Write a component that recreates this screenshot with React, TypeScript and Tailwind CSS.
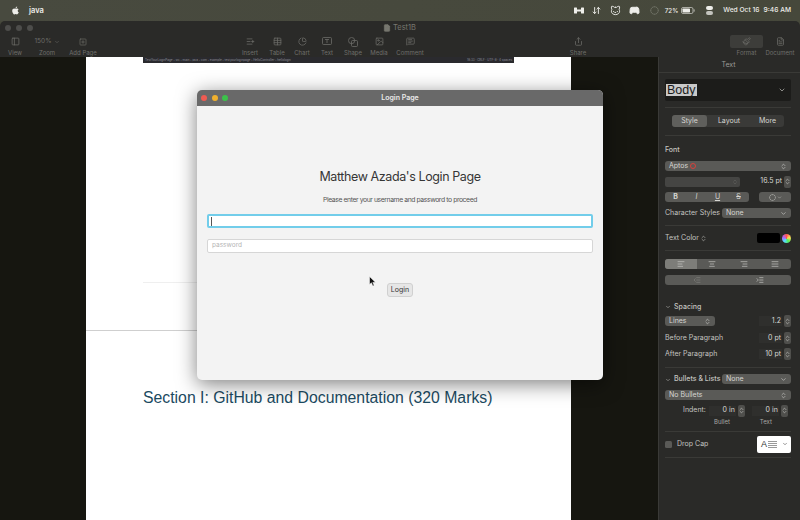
import {
  AlignCenter,
  AlignJustify,
  AlignLeft,
  AlignRight,
  ArrowDownUp,
  Cat,
  ChartPie,
  ChevronDown,
  ChevronsUpDown,
  CircleDashed,
  FileText,
  Gamepad2,
  Image,
  IndentDecrease,
  IndentIncrease,
  ListPlus,
  MessageSquareText,
  PanelLeft,
  Paintbrush,
  Share,
  SquarePlus,
  Table,
} from "lucide-react";
import type { ReactNode } from "react";
import { FaApple } from "react-icons/fa";

function ToolItem({ icon, label, className }: { icon: ReactNode; label: string; className: string }) {
  return (
    <div className={`flex flex-col items-center gap-px ${className}`}>
      <div className="flex h-[13px] items-center justify-center text-[#6c6c68]">{icon}</div>
      <span className="text-[6px] leading-[8px] whitespace-nowrap text-[#6f6f6b]">{label}</span>
    </div>
  );
}

function Sep() {
  return <div className="h-px bg-[#3a3a37]" />;
}

function Pill({ label, className }: { label: string; className: string }) {
  return (
    <div className={`flex h-[10px] shrink-0 items-center justify-between rounded-[3px] bg-[#5a5a57] px-[4px] text-[7px] text-[#d6d6d2] ${className}`}>
      <span>{label}</span>
      <ChevronDown size={7} strokeWidth={2} />
    </div>
  );
}

function SelectRow({ label, className }: { label: ReactNode; className: string }) {
  return (
    <div className={`flex h-[10px] shrink-0 items-center justify-between rounded-[3px] bg-[#5a5a57] px-[4px] text-[7px] text-[#d6d6d2] ${className}`}>
      <span className="flex items-center gap-[1px]">{label}</span>
      <ChevronsUpDown size={7} strokeWidth={2} />
    </div>
  );
}

function Stepper() {
  return (
    <div className="flex h-[12px] w-[7px] shrink-0 items-center justify-center rounded-[2px] bg-[#4f4f4c] text-[#cfcfcb]">
      <ChevronsUpDown size={7} strokeWidth={2} />
    </div>
  );
}

function NumberBox({ value, className }: { value: string; className: string }) {
  return (
    <div className={`flex h-[10px] items-center justify-end bg-[#2f2f2d] pr-px whitespace-nowrap text-[#d8d8d4] ${className}`}>
      {value}
    </div>
  );
}

function NumberRow({ label, value }: { label: string; value: string }) {
  return (
    <div className="flex h-[16px] items-center justify-between text-[#c4c4c0]">
      <span className="pt-px">{label}</span>
      <div className="flex items-center gap-[2px]">
        <NumberBox value={value} className="w-[23px]" />
        <Stepper />
      </div>
    </div>
  );
}

function Lights({ size, gap, colors }: { size: string; gap: string; colors: string[] }) {
  return (
    <div className={`flex items-center ${gap}`}>
      {colors.map((c, i) => (
        <span key={i} className={`${size} rounded-full`} style={{ backgroundColor: c }} />
      ))}
    </div>
  );
}

function MenuBar() {
  return (
    <div className="flex h-[21px] shrink-0 items-center bg-gradient-to-r from-[#484a3f] to-[#46483b] pr-[9px] pl-[11px] text-[7.5px] font-medium text-[#eeeeea]">
      <FaApple size={9} />
      <span className="ml-[9px] font-semibold">java</span>
      <div className="ml-auto flex items-center">
        {/* bar with two weights */}
        <svg className="mr-[8px]" width="10" height="7" viewBox="0 0 10 7" fill="currentColor">
          <rect x="0" y="0.5" width="3" height="6" rx="0.5" />
          <rect x="3" y="2.5" width="4" height="2" />
          <rect x="7" y="0.5" width="3" height="6" rx="0.5" />
        </svg>
        <ArrowDownUp size={9} strokeWidth={2.5} className="mr-[9px]" />
        <Cat size={11} className="mr-[8px]" />
        <Gamepad2 size={11} fill="currentColor" className="mr-[10px]" />
        <CircleDashed size={9} className="mr-[6px] text-[#8a8c80]" />
        <span className="mr-[3px] text-[6.2px]">72%</span>
        {/* battery */}
        <svg className="mr-[11px]" width="14" height="7" viewBox="0 0 14 7">
          <rect x="0.5" y="0.5" width="11.5" height="6" rx="1.5" fill="none" stroke="currentColor" strokeOpacity="0.6" />
          <rect x="1.5" y="1.5" width="7.5" height="4" rx="0.7" fill="currentColor" />
          <rect x="12.7" y="2.3" width="1" height="2.4" rx="0.4" fill="currentColor" fillOpacity="0.6" />
        </svg>
        {/* control center */}
        <svg className="mr-[10px]" width="7" height="9" viewBox="0 0 7 9" fill="currentColor">
          <rect x="0" y="0" width="7" height="4" rx="2" />
          <rect x="0" y="5" width="7" height="4" rx="2" fillOpacity="0.75" />
        </svg>
        <span className="mr-[4px] text-[6.7px]">Wed Oct 16</span>
        <span className="text-[6.7px]">9:46 AM</span>
      </div>
    </div>
  );
}

function Toolbar() {
  return (
    <div className="shrink-0 bg-[#46483b]">
      <div className="flex h-[36px] flex-col rounded-t-[5px] bg-[#2a2a28]">
        <div className="flex h-[14px] shrink-0 items-center pl-[5px]">
          <Lights size="size-[6px]" gap="gap-[5px]" colors={["#4d4d4b", "#4d4d4b", "#4d4d4b"]} />
          <div className="ml-[350px] flex items-center gap-[2px] text-[7.5px] text-[#77776f]">
            <FileText size={8} fill="currentColor" />
            <span>Test1B</span>
          </div>
        </div>
        <div className="flex items-start">
          <ToolItem className="ml-[9px] w-[12px]" label="View" icon={<PanelLeft size={9} />} />
          <ToolItem
            className="ml-[15px] w-[22px]"
            label="Zoom"
            icon={
              <span className="flex items-center gap-[2px] text-[6.5px] whitespace-nowrap">
                150% <ChevronDown size={6} />
              </span>
            }
          />
          <ToolItem className="ml-[12px] w-[26px]" label="Add Page" icon={<SquarePlus size={8} />} />
          <ToolItem className="ml-[146px] w-[16px]" label="Insert" icon={<ListPlus size={9} />} />
          <ToolItem className="ml-[11px] w-[16px]" label="Table" icon={<Table size={9} />} />
          <ToolItem className="ml-[9px] w-[16px]" label="Chart" icon={<ChartPie size={9} />} />
          <ToolItem
            className="ml-[9px] w-[16px]"
            label="Text"
            icon={
              <svg width="10" height="9" viewBox="0 0 10 9" fill="none" stroke="currentColor" strokeWidth="0.8">
                <rect x="0.5" y="0.5" width="9" height="7" rx="1" />
                <path d="M3 2.5H7M5 2.5V6" />
              </svg>
            }
          />
          <ToolItem
            className="ml-[10px] w-[16px]"
            label="Shape"
            icon={
              <svg width="10" height="10" viewBox="0 0 10 10" fill="none" stroke="currentColor" strokeWidth="0.8">
                <circle cx="3.6" cy="3.6" r="3.1" />
                <rect x="3.5" y="3.5" width="6" height="6" rx="1" />
              </svg>
            }
          />
          <ToolItem className="ml-[10px] w-[16px]" label="Media" icon={<Image size={9} />} />
          <ToolItem className="ml-[15px] w-[16px]" label="Comment" icon={<MessageSquareText size={9} />} />
          <ToolItem className="ml-[152px] w-[16px]" label="Share" icon={<Share size={9} />} />
          <div className="ml-[144px] flex w-[33px] flex-col items-center gap-px">
            <div className="flex h-[13px] w-[33px] items-center justify-center rounded-[2px] bg-[#3d3d3a] text-[#6c6c68]">
              <Paintbrush size={9} />
            </div>
            <span className="text-[6px] leading-[8px] text-[#6f6f6b]">Format</span>
          </div>
          <ToolItem className="ml-[2px] w-[30px]" label="Document" icon={<FileText size={9} />} />
        </div>
      </div>
    </div>
  );
}

function LoginWindow() {
  return (
    <div className="absolute top-[33px] left-[111px] flex h-[290px] w-[406px] flex-col overflow-hidden rounded-[5px] bg-[#f3f3f3] shadow-[0_4px_20px_rgba(0,0,0,0.5)]">
      <div className="relative flex h-[16px] shrink-0 items-center justify-center bg-[#696969]">
        <div className="absolute top-[5px] left-[4px]">
          <Lights size="size-[6px]" gap="gap-[4.5px]" colors={["#ee5b52", "#f0b02e", "#3cc24a"]} />
        </div>
        <span className="text-[7px] font-semibold text-[#e9e9e9]">Login Page</span>
      </div>
      <div className="flex flex-1 flex-col items-center px-[10px]">
        <h1 className="mt-[62px] text-[12.5px] leading-[18px] tracking-[-0.4px] text-[#363636]">Matthew Azada's Login Page</h1>
        <p className="mt-[8px] text-[6.8px] leading-[12px] tracking-[-0.4px] text-[#555555]">Please enter your username and password to proceed</p>
        <div className="mt-[8px] flex h-[14px] w-full items-center rounded-[2px] border-2 border-[#72cdea] bg-white px-[2px]">
          <span className="h-[9px] w-px bg-[#555555]" />
        </div>
        <div className="mt-[11px] flex h-[14px] w-full items-center rounded-[2px] border border-[#d6d6d6] bg-white px-[4px] text-[6.5px] text-[#b4b4b4]">
          password
        </div>
        <button className="mt-[30px] flex h-[14px] w-[26px] items-center justify-center rounded-[3px] border border-[#d0d0d0] bg-[#e6e6e6] text-[7px] text-[#333333]">
          Login
        </button>
      </div>
      <svg className="absolute top-[186px] left-[172px]" width="7" height="11" viewBox="0 0 7 11">
        <path d="M0.5 0.5 L0.5 8.5 L2.4 6.8 L3.8 10 L5.2 9.4 L3.8 6.4 L6.4 6.2 Z" fill="#111111" stroke="#ffffff" strokeWidth="0.5" />
      </svg>
    </div>
  );
}

function Page() {
  return (
    <div className="flex flex-1 bg-[#161610]">
      <div className="relative ml-[86px] flex w-[485px] flex-col bg-white">
        <div className="ml-[57px] flex h-[6px] w-[371px] items-center justify-between bg-[#2a2a2e] px-[2px] text-[3px] text-[#8f8f98]">
          <span className="whitespace-nowrap">TestYourLoginPage › src › main › java › com › example › testyourloginpage › HelloController › hellologin</span>
          <span className="whitespace-nowrap">18:33 · CRLF · UTF-8 · 4 spaces</span>
        </div>
        <div className="mt-[219px] ml-[57px] h-px w-[54px] bg-[#efefef]" />
        <div className="mt-[47px] h-px w-full bg-[#cfcfcf]" />
        <h2 className="mt-[57px] ml-[57px] font-['Liberation_Sans',sans-serif] text-[15.8px] leading-[20px] whitespace-nowrap text-[#1b4a61]">
          Section I: GitHub and Documentation (320 Marks)
        </h2>
        <LoginWindow />
      </div>
    </div>
  );
}

function Inspector() {
  return (
    <div className="flex w-[142px] shrink-0 flex-col border-l border-[#3a3a37] bg-[#2a2a28] pr-[9px] pl-[6px] text-[7px] text-[#c4c4c0]">
      <div className="-mr-[9px] -ml-[6px] flex h-[16px] shrink-0 items-center justify-center border-b border-[#3a3a37] pt-[2px] pr-[2px] text-[#9a9a96]">Text</div>
      <div className="mt-[6px] flex h-[22px] shrink-0 items-center justify-between rounded-[2px] bg-[#1c1c1a] pr-[5px] pl-[1px]">
        <span className="bg-[#c9c9c9] px-[1px] font-['Liberation_Sans',sans-serif] text-[12.5px] leading-[12px] text-[#1a1a1a]">Body</span>
        <ChevronDown size={8} />
      </div>
      <div className="mt-[6px]"><Sep /></div>
      <div className="mx-[7px] mt-[7px] flex h-[12px] shrink-0 items-center rounded-[3px] bg-[#3a3a38] text-[#d6d6d2]">
        <span className="flex h-full w-[35px] items-center justify-center rounded-[3px] bg-[#5f5f5c]">Style</span>
        <span className="w-[44px] text-center">Layout</span>
        <span className="flex-1 text-center">More</span>
      </div>
      <div className="mt-[8px]"><Sep /></div>
      <div className="mt-[9px] h-[10px] leading-[10px] font-medium">Font</div>
      <SelectRow
        className="mt-[6px] w-full"
        label={
          <>
            Aptos <span className="ml-[1px] size-[6px] rounded-full border border-[#d9403a]" />
          </>
        }
      />
      <div className="mt-[5px] flex h-[11px] items-center">
        <div className="flex h-[10px] w-[75px] items-center justify-end rounded-[2px] bg-[#454543] pr-[2px] text-[#6a6a67]">
          <ChevronsUpDown size={6} />
        </div>
        <span className="ml-[20px] w-[22px] text-right whitespace-nowrap text-[#d8d8d4]">16.5 pt</span>
        <div className="ml-[2px]"><Stepper /></div>
      </div>
      <div className="mt-[5px] flex items-center">
        <div className="grid h-[10px] w-[84px] grid-cols-4 items-center rounded-[3px] bg-[#5a5a57] text-center text-[#d6d6d2]">
          <span className="font-bold">B</span>
          <span className="italic">I</span>
          <span className="underline">U</span>
          <span className="line-through">S</span>
        </div>
        <div className="ml-[10px] flex h-[10px] w-[32px] items-center justify-center gap-[1px] rounded-[3px] bg-[#5a5a57] text-[#d6d6d2]">
          <CircleDashed size={7} />
          <ChevronDown size={5} />
        </div>
      </div>
      <div className="mt-[6px] flex h-[10px] items-center justify-between">
        <span className="whitespace-nowrap">Character Styles</span>
        <Pill label="None" className="w-[69px]" />
      </div>
      <div className="mt-[7px]"><Sep /></div>
      <div className="mt-[7px] flex h-[10px] items-center justify-between">
        <span className="flex items-center gap-[1px] whitespace-nowrap">Text Color <ChevronsUpDown size={7} /></span>
        <div className="flex items-center gap-[2px]">
          <div className="h-[10px] w-[23px] rounded-[2px] bg-black" />
          <div className="size-[9px] rounded-full bg-[conic-gradient(#f55,#fd5,#5e5,#5df,#a6f,#f55)]" />
        </div>
      </div>
      <div className="mt-[7px]"><Sep /></div>
      <div className="mt-[8px] grid h-[10px] grid-cols-4 items-center rounded-[3px] bg-[#5a5a57] text-[#c9c9c5]">
        <span className="flex h-full items-center justify-center rounded-l-[3px] bg-[#7d7d79]"><AlignLeft size={8} /></span>
        <span className="flex justify-center"><AlignCenter size={8} /></span>
        <span className="flex justify-center"><AlignRight size={8} /></span>
        <span className="flex justify-center"><AlignJustify size={8} /></span>
      </div>
      <div className="mt-[6px] grid h-[10px] grid-cols-2 items-center rounded-[3px] bg-[#5a5a57] text-[#c9c9c5]">
        <span className="flex justify-center text-[#80807c]"><IndentDecrease size={8} /></span>
        <span className="flex justify-center"><IndentIncrease size={8} /></span>
      </div>
      <div className="mt-[17px] flex h-[10px] items-center gap-[3px] font-medium">
        <ChevronDown size={6} />
        Spacing
      </div>
      <div className="mt-[4px] flex h-[10px] items-center justify-between">
        <SelectRow label="Lines" className="w-[50px]" />
        <div className="flex items-center gap-[2px]">
          <NumberBox value="1.2" className="w-[23px]" />
          <Stepper />
        </div>
      </div>
      <div className="mt-[4px]">
        <NumberRow label="Before Paragraph" value="0 pt" />
        <NumberRow label="After Paragraph" value="10 pt" />
      </div>
      <div className="mt-[5px]"><Sep /></div>
      <div className="mt-[6px] flex h-[10px] items-center justify-between">
        <span className="flex items-center gap-[3px] pt-px font-medium whitespace-nowrap">
          <ChevronDown size={6} />
          Bullets &amp; Lists
        </span>
        <Pill label="None" className="w-[69px]" />
      </div>
      <SelectRow label="No Bullets" className="mt-[6px] w-full" />
      <div className="mt-[5px] flex h-[11px] items-center">
        <span className="ml-[18px]">Indent:</span>
        <NumberBox value="0 in" className="ml-[3px] w-[27px]" />
        <div className="ml-[2px]"><Stepper /></div>
        <NumberBox value="0 in" className="ml-[7px] w-[27px]" />
        <div className="ml-[2px]"><Stepper /></div>
      </div>
      <div className="mt-[1px] flex h-[9px] items-center text-[6px] text-[#a8a8a4]">
        <span className="ml-[49px]">Bullet</span>
        <span className="ml-[30px]">Text</span>
      </div>
      <div className="mt-[5px]"><Sep /></div>
      <div className="mt-[3px] flex h-[18px] shrink-0 items-center justify-between">
        <span className="flex items-center gap-[5px] pt-px">
          <span className="size-[7px] rounded-[1.5px] bg-[#5a5a57]" />
          Drop Cap
        </span>
        <div className="flex h-[17px] w-[34px] items-center justify-between rounded-[2px] bg-white pr-[3px] pl-[4px] text-[#333333]">
          <span className="flex items-center gap-px">
            <span className="font-['Liberation_Sans',sans-serif] text-[9px] leading-[9px]">A</span>
            <span className="flex flex-col gap-px">
              <span className="h-px w-[9px] bg-[#999999]" />
              <span className="h-px w-[9px] bg-[#999999]" />
              <span className="h-px w-[9px] bg-[#999999]" />
              <span className="h-px w-[9px] bg-[#999999]" />
            </span>
          </span>
          <ChevronDown size={6} />
        </div>
      </div>
      <div className="mt-[4px]"><Sep /></div>
    </div>
  );
}

export default function App() {
  return (
    <div className="flex h-[520px] w-[800px] flex-col overflow-hidden bg-[#161610] font-['Inter',sans-serif]">
      <MenuBar />
      <Toolbar />
      <div className="flex min-h-0 flex-1">
        <Page />
        <Inspector />
      </div>
    </div>
  );
}
